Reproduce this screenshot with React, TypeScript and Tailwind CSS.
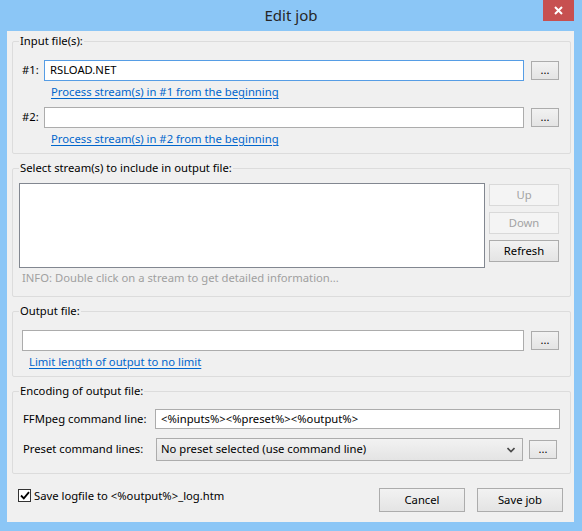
import type { ReactNode } from "react";

function Group({ title, className = "", children }: { title: string; className?: string; children: ReactNode }) {
  return (
    <fieldset className={`rounded-[2px] border border-[#dcdcdc] ${className}`}>
      <legend className="ml-[6px] h-[16px] px-[1px] leading-[16px]">{title}</legend>
      {children}
    </fieldset>
  );
}

function Btn({ children, className = "", disabled = false }: { children: ReactNode; className?: string; disabled?: boolean }) {
  return (
    <button
      className={`flex items-center justify-center border leading-none ${
        disabled
          ? "border-[#d9d9d9] bg-[#f4f4f4] text-[#a3a3a3]"
          : "border-[#acacac] bg-linear-to-b from-[#f2f2f2] to-[#e4e4e4] text-black"
      } ${className}`}
    >
      {children}
    </button>
  );
}

function DotsBtn({ className = "" }: { className?: string }) {
  return <Btn className={`h-[19px] w-[28px] items-end pb-[4px] text-[11px] ${className}`}>...</Btn>;
}

function Link({ children }: { children: ReactNode }) {
  return <a className="cursor-pointer text-[#0066cc] underline underline-offset-[2px]">{children}</a>;
}

export default function App() {
  return (
    <div className="flex h-[531px] w-[582px] flex-col bg-[#8bc6f6] font-['Noto_Sans',sans-serif] text-[11.25px] text-black">
      <div className="relative flex h-[31px] items-center justify-center pb-[1px]">
        <span className="text-[15px] text-[#262626]">Edit job</span>
        <button className="absolute right-[8px] top-0 flex h-[21px] w-[31px] items-center justify-center bg-[#c75050]">
          <svg width="9" height="9" viewBox="0 0 9 9">
            <path d="M1 1 L8 8 M8 1 L1 8" stroke="white" strokeWidth="2" />
          </svg>
        </button>
      </div>

      <div className="ml-[7px] flex h-[491px] w-[567px] flex-col bg-[#f0f0f0] pl-[5px] pr-[3px] pt-[2px]">
        <Group title="Input file(s):">
          <div className="pb-[6px] pl-[9px] pr-[11px] pt-[11px]">
            <div className="flex h-[21px] items-center">
              <span className="w-[22px]">#1:</span>
              <div className="flex h-[21px] w-[480px] items-center border border-[#569de5] bg-white pl-[5px]">RSLOAD.NET</div>
              <DotsBtn className="ml-[7px]" />
            </div>
            <div className="mt-[3px] h-[16px] pl-[29px] leading-[16px]">
              <Link>Process stream(s) in #1 from the beginning</Link>
            </div>
            <div className="mt-[7px] flex h-[21px] items-center">
              <span className="w-[22px]">#2:</span>
              <div className="h-[21px] w-[480px] border border-[#acacac] bg-white" />
              <DotsBtn className="ml-[7px]" />
            </div>
            <div className="mt-[3px] h-[16px] pl-[29px] leading-[16px]">
              <Link>Process stream(s) in #2 from the beginning</Link>
            </div>
          </div>
        </Group>

        <Group title="Select stream(s) to include in output file:" className="mt-[6px]">
          <div className="pb-[10px] pl-[6px] pr-[11px] pt-[7px]">
            <div className="flex gap-[4px]">
              <div className="h-[85px] w-[466px] border border-[#828790] bg-white" />
              <div className="flex flex-col gap-[6px] pt-[1px]">
                <Btn disabled className="h-[22px] w-[70px]">Up</Btn>
                <Btn disabled className="h-[22px] w-[70px]">Down</Btn>
                <Btn className="h-[22px] w-[70px]">Refresh</Btn>
              </div>
            </div>
            <div className="mt-[2px] h-[16px] pl-[3px] leading-[16px] text-[#a0a0a0]">
              INFO: Double click on a stream to get detailed information...
            </div>
          </div>
        </Group>

        <Group title="Output file:" className="mt-[6px]">
          <div className="pb-[6px] pl-[9px] pr-[11px] pt-[11px]">
            <div className="flex h-[21px] items-center">
              <div className="h-[21px] w-[502px] border border-[#acacac] bg-white" />
              <DotsBtn className="ml-[7px]" />
            </div>
            <div className="mt-[3px] h-[16px] pl-[7px] leading-[16px]">
              <Link>Limit length of output to no limit</Link>
            </div>
          </div>
        </Group>

        <Group title="Encoding of output file:" className="mt-[6px]">
          <div className="pb-[12px] pl-[10px] pr-[10px] pt-[10px]">
            <div className="flex h-[20px] items-center">
              <span className="w-[132px]">FFMpeg command line:</span>
              <div className="flex h-[20px] w-[405px] items-center border border-[#acacac] bg-white pl-[5px]">
                &lt;%inputs%&gt;&lt;%preset%&gt;&lt;%output%&gt;
              </div>
            </div>
            <div className="mt-[9px] flex h-[23px] items-center">
              <span className="w-[133px]">Preset command lines:</span>
              <div className="flex h-[23px] w-[367px] items-center border border-[#acacac] bg-linear-to-b from-[#f2f2f2] to-[#e4e4e4] pl-[4px] pr-[7px]">
                <span className="flex-1">No preset selected (use command line)</span>
                <svg width="8" height="6" viewBox="0 0 8 6">
                  <path d="M0.5 1 L4 4.5 L7.5 1" stroke="#4a4a4a" strokeWidth="1.6" fill="none" />
                </svg>
              </div>
              <DotsBtn className="ml-[6px]" />
            </div>
          </div>
        </Group>

        <div className="mr-[8px] mt-[14px] flex h-[24px] items-start">
          <div className="ml-[6px] mt-[1px] flex items-center">
            <div className="flex h-[13px] w-[13px] items-center justify-center border border-[#333] bg-white">
              <svg width="10" height="9" viewBox="0 0 10 9">
                <path d="M1 4.5 L3.8 7.3 L9 1.2" stroke="black" strokeWidth="1.8" fill="none" />
              </svg>
            </div>
            <span className="ml-[3px] leading-[13px]">Save logfile to &lt;%output%&gt;_log.htm</span>
          </div>
          <Btn className="ml-auto h-[24px] w-[86px]">Cancel</Btn>
          <Btn className="ml-[12px] h-[24px] w-[86px]">Save job</Btn>
        </div>
      </div>
    </div>
  );
}
